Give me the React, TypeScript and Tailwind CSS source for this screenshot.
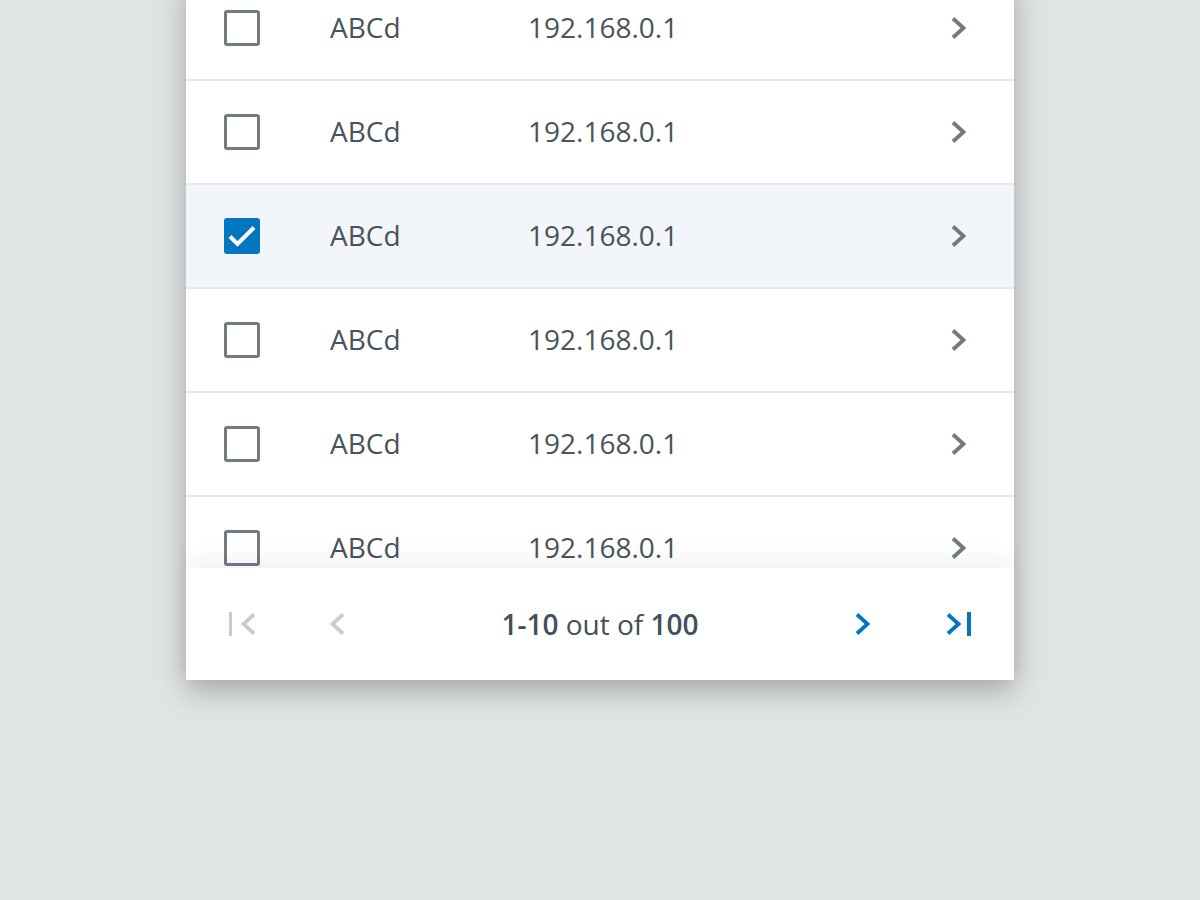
const rows = [
  { name: "ABCd", ip: "192.168.0.1", checked: false },
  { name: "ABCd", ip: "192.168.0.1", checked: false },
  { name: "ABCd", ip: "192.168.0.1", checked: true },
  { name: "ABCd", ip: "192.168.0.1", checked: false },
  { name: "ABCd", ip: "192.168.0.1", checked: false },
  { name: "ABCd", ip: "192.168.0.1", checked: false },
]

const Chevron = ({ color, flip }: { color: string; flip?: boolean }) => (
  <svg width="17" height="24" viewBox="0 0 17 24" className={flip ? "-scale-x-100" : ""}>
    <polyline points="3,2.5 13.5,12 3,21.5" fill="none" stroke={color} strokeWidth="3.8" strokeLinejoin="miter" />
  </svg>
)

const Checkbox = ({ checked }: { checked: boolean }) =>
  checked ? (
    <div className="flex h-9 w-9 items-center justify-center rounded-[3px] bg-[#0077c0]">
      <svg width="30" height="24" viewBox="0 0 30 24">
        <polyline points="3,12.5 10.5,20 27,3.5" fill="none" stroke="#fff" strokeWidth="4" />
      </svg>
    </div>
  ) : (
    <div className="h-9 w-9 rounded-[3px] border-[3px] border-[#707b83] bg-white" />
  )

export default function App() {
  return (
    <div
      className="flex h-[900px] w-full justify-center overflow-hidden bg-[#e1e4e5]"
      style={{ fontFamily: '"Open Sans", "Noto Sans", sans-serif' }}
    >
      <div className="mt-[-23px] flex h-[703px] w-[828px] flex-col bg-white shadow-[0_10px_28px_rgba(0,0,0,0.28)]">
        <div className="h-[591px] overflow-hidden">
          {rows.map((r, i) => (
            <div
              key={i}
              className={`flex h-[104px] items-center border-b-2 border-[#e6e8ea] pl-[38px] pr-[47px] ${
                r.checked ? "bg-[#f2f6fa]" : "bg-white"
              }`}
            >
              <Checkbox checked={r.checked} />
              <span className="ml-[70px] mb-[2px] w-[198px] text-[28px] text-[#49535a]">{r.name}</span>
              <span className="mb-[2px] flex-1 text-[28px] text-[#49535a]">{r.ip}</span>
              <Chevron color="#6f7a82" />
            </div>
          ))}
        </div>
        <div className="relative z-10 flex h-[112px] items-center bg-white shadow-[0_-10px_22px_rgba(0,0,0,0.05)]">
          <div className="flex w-[828px] items-center">
            <div className="ml-[43px] flex items-center gap-[8px]">
              <div className="h-6 w-[3px] bg-[#c9cccf]" />
              <Chevron color="#c9cccf" flip />
            </div>
            <div className="ml-[72px]">
              <Chevron color="#c9cccf" flip />
            </div>
            <div className="flex-1 text-center text-[28px] text-[#444f57]">
              <span className="font-semibold">1-10</span> out of <span className="font-semibold">100</span>
            </div>
            <div className="mr-[74px]">
              <Chevron color="#0077c0" />
            </div>
            <div className="mr-[43px] flex items-center gap-[5px]">
              <Chevron color="#0077c0" />
              <div className="h-6 w-[4px] bg-[#0077c0]" />
            </div>
          </div>
        </div>
      </div>
    </div>
  )
}
